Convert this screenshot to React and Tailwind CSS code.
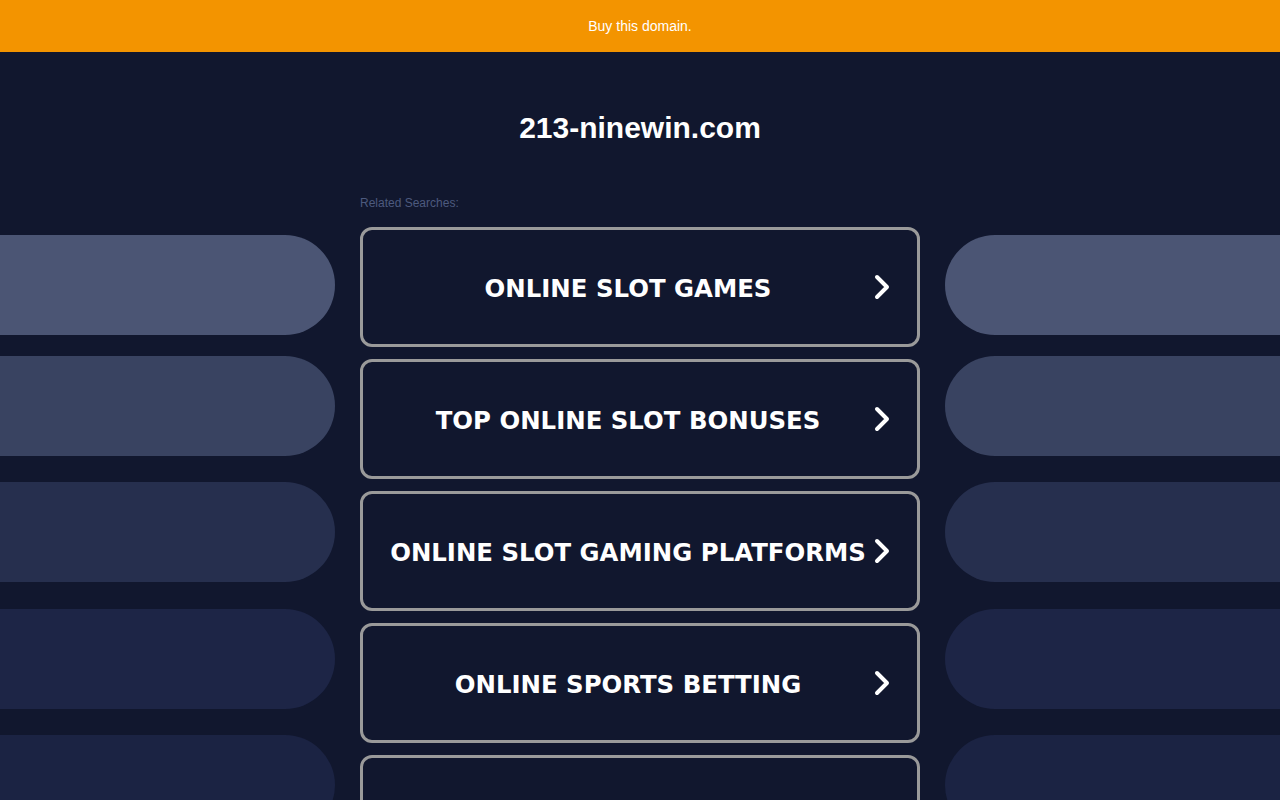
const searches = [
  'ONLINE SLOT GAMES',
  'TOP ONLINE SLOT BONUSES',
  'ONLINE SLOT GAMING PLATFORMS',
  'ONLINE SPORTS BETTING',
  'BEST ONLINE CASINOS',
];

const pills = [
  { cls: 'bg-[#4b5574]', gap: 'mt-0' },
  { cls: 'bg-[#394361]', gap: 'mt-[21px]' },
  { cls: 'bg-[#262f4e]', gap: 'mt-[26px]' },
  { cls: 'bg-[#1d2546]', gap: 'mt-[27px]' },
  { cls: 'bg-[#1b2343]', gap: 'mt-[26px]' },
];

function Pills({ side }) {
  return (
    <div className="w-[335px] shrink-0 pt-[183px]">
      {pills.map((p, i) => (
        <div
          key={i}
          className={`h-[100px] ${p.cls} ${p.gap} ${side === 'left' ? 'rounded-r-[50px]' : 'rounded-l-[50px]'}`}
        />
      ))}
    </div>
  );
}

function Chevron() {
  return (
    <svg
      className="absolute right-[27px] top-1/2 -translate-y-1/2"
      width="16"
      height="26"
      viewBox="0 0 16 26"
      fill="none"
      stroke="currentColor"
      strokeWidth="4"
      strokeLinecap="round"
      strokeLinejoin="round"
    >
      <polyline points="3,3 13,13 3,23" />
    </svg>
  );
}

export default function App() {
  return (
    <div className="h-[800px] overflow-hidden bg-[#11172e] font-['Liberation_Sans',Arial,sans-serif]">
      <div className="h-[52px] bg-[#f39400] flex items-center justify-center text-white text-sm">
        Buy this domain.
      </div>

      <div className="flex justify-between">
        <Pills side="left" />

        <div className="w-[560px] shrink-0">
          <h1 className="text-white text-[30px] font-bold text-center mt-[58px] leading-9">
            213-ninewin.com
          </h1>
          <p className="text-[#4d5a7e] text-xs mt-[49px]">Related Searches:</p>
          <div className="mt-[16px] flex flex-col gap-3">
            {searches.map((s) => (
              <a
                key={s}
                href="#"
                className="h-[120px] border-[3px] border-[#9a9a9a] rounded-[12px] flex items-center justify-center relative text-white"
              >
                <span className="font-['DejaVu_Sans',Verdana,sans-serif] font-bold text-[24.4px] pr-6 translate-y-[2px]">
                  {s}
                </span>
                <Chevron />
              </a>
            ))}
          </div>
        </div>

        <Pills side="right" />
      </div>
    </div>
  );
}
